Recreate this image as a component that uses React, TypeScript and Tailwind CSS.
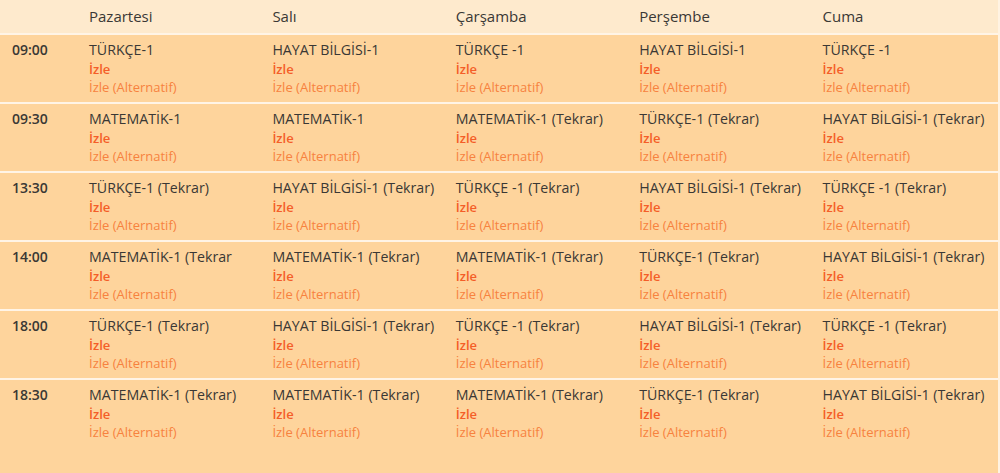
import React from "react";

const days = ["Pazartesi", "Salı", "Çarşamba", "Perşembe", "Cuma"];

const rows: { time: string; lessons: string[] }[] = [
  {
    time: "09:00",
    lessons: ["TÜRKÇE-1", "HAYAT BİLGİSİ-1", "TÜRKÇE -1", "HAYAT BİLGİSİ-1", "TÜRKÇE -1"],
  },
  {
    time: "09:30",
    lessons: [
      "MATEMATİK-1",
      "MATEMATİK-1",
      "MATEMATİK-1 (Tekrar)",
      "TÜRKÇE-1 (Tekrar)",
      "HAYAT BİLGİSİ-1 (Tekrar)",
    ],
  },
  {
    time: "13:30",
    lessons: [
      "TÜRKÇE-1 (Tekrar)",
      "HAYAT BİLGİSİ-1 (Tekrar)",
      "TÜRKÇE -1 (Tekrar)",
      "HAYAT BİLGİSİ-1 (Tekrar)",
      "TÜRKÇE -1 (Tekrar)",
    ],
  },
  {
    time: "14:00",
    lessons: [
      "MATEMATİK-1 (Tekrar",
      "MATEMATİK-1 (Tekrar)",
      "MATEMATİK-1 (Tekrar)",
      "TÜRKÇE-1 (Tekrar)",
      "HAYAT BİLGİSİ-1 (Tekrar)",
    ],
  },
  {
    time: "18:00",
    lessons: [
      "TÜRKÇE-1 (Tekrar)",
      "HAYAT BİLGİSİ-1 (Tekrar)",
      "TÜRKÇE -1 (Tekrar)",
      "HAYAT BİLGİSİ-1 (Tekrar)",
      "TÜRKÇE -1 (Tekrar)",
    ],
  },
  {
    time: "18:30",
    lessons: [
      "MATEMATİK-1 (Tekrar)",
      "MATEMATİK-1 (Tekrar)",
      "MATEMATİK-1 (Tekrar)",
      "TÜRKÇE-1 (Tekrar)",
      "HAYAT BİLGİSİ-1 (Tekrar)",
    ],
  },
];

const gridCols = "grid grid-cols-[77px_183.4px_183.4px_183.4px_183.4px_1fr]";

function LessonCell({ name }: { name: string }) {
  return (
    <div className="px-3 pt-[6px] leading-[18.5px] text-[13px]">
      <div className="text-[#3a3835] text-[14.2px] font-medium whitespace-nowrap">{name}</div>
      <div className="text-[#f45e28] font-semibold">İzle</div>
      <div className="text-[#f7823f]">İzle (Alternatif)</div>
    </div>
  );
}

export default function App() {
  return (
    <div className="w-[1000px] h-[473px] bg-[#fff3e2] overflow-hidden font-['Open_Sans',sans-serif]">
      <div className="w-[998px] h-full bg-[#fed49c] flex flex-col">
        <div className={`${gridCols} h-[33px] items-center bg-[#feeacd] text-[15px] text-[#3a3835] font-medium`}>
          <div />
          {days.map((d) => (
            <div key={d} className="px-3">
              {d}
            </div>
          ))}
        </div>
        {rows.map((r, i) => (
          <div
            key={r.time}
            className={`${gridCols} border-t-2 border-[#fff4e6] ${
              i === rows.length - 1 ? "flex-1" : "h-[69px]"
            }`}
          >
            <div className="px-3 pt-[6px] leading-[18.5px] text-[14px] font-semibold text-[#3a3835]">
              {r.time}
            </div>
            {r.lessons.map((l, j) => (
              <LessonCell key={j} name={l} />
            ))}
          </div>
        ))}
      </div>
    </div>
  );
}
